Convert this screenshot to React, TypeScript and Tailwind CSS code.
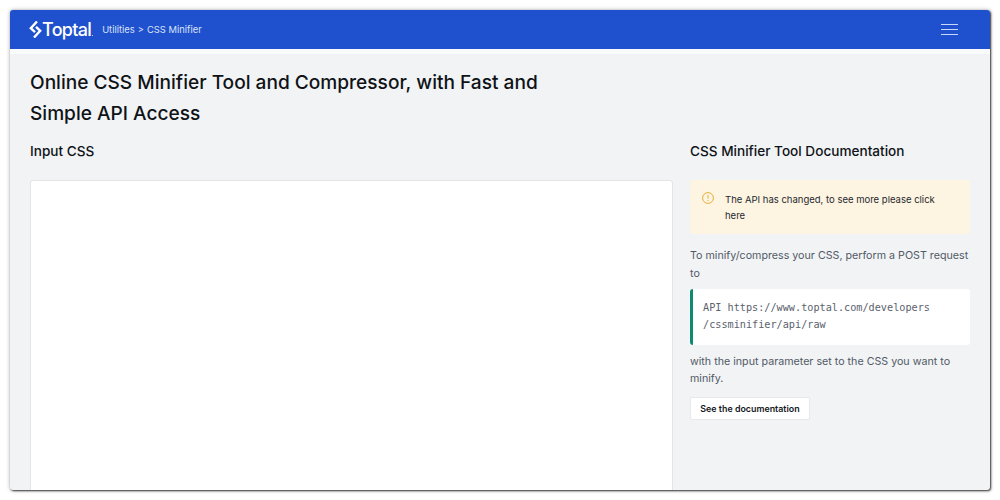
export default function App() {
  return (
    <div className="h-[500px] w-[1000px] overflow-hidden bg-white p-[10px] font-['Inter',sans-serif]">
      <div className="flex h-[480px] flex-col overflow-hidden rounded-[3px] bg-[#f1f3f5] shadow-[1px_1px_2px_rgba(0,0,0,0.75),0_0_4px_rgba(0,0,0,0.3)]">
        <header className="flex h-[39px] shrink-0 items-center justify-between bg-[#1f50cd] pl-[19px] pr-[32px]">
          <div className="flex items-center">
            <svg width="13" height="17" viewBox="0 0 13 17" fill="none" stroke="white" strokeWidth="2.4">
              <path d="M8 0.5 L1.8 7.2 L6 11.2 M5 16.5 L11.2 9.8 L7 5.8" />
            </svg>
            <span className="text-[18px] font-medium leading-none tracking-[-0.7px] text-white">Toptal</span>
            <span className="mt-[11px] ml-[1px] h-[1px] w-[1px] bg-white/70" />
            <div className="ml-[9px] mt-[1px] flex items-center text-[9.4px] text-[#dbe4fa]">
              <span>Utilities</span>
              <span className="mx-[3px]">&gt;</span>
              <span>CSS Minifier</span>
            </div>
          </div>
          <div className="flex w-[17px] flex-col gap-[3.5px]">
            <div className="h-[1.5px] bg-[#c9d7fa]" />
            <div className="h-[1.5px] bg-[#c9d7fa]" />
            <div className="h-[1.5px] bg-[#c9d7fa]" />
          </div>
        </header>
        <div className="h-[5px] shrink-0 bg-[#f9fafa]" />
        <main className="flex flex-1 flex-col overflow-hidden px-[20px] pt-[13px]">
          <h1 className="w-[530px] text-[19.1px] font-medium leading-[31px] text-[#0f1216]">
            Online CSS Minifier Tool and Compressor, with Fast and Simple API Access
          </h1>
          <div className="mt-[11px] flex flex-1 gap-[17px] overflow-hidden">
            <section className="flex w-[643px] flex-col">
              <h2 className="text-[13.6px] font-medium leading-[22px] text-[#0f1216]">Input CSS</h2>
              <div className="mt-[18px] flex-1 rounded-t-[3px] border border-b-0 border-[#e3e6e9] bg-white" />
            </section>
            <aside className="w-[280px]">
              <h2 className="text-[13.6px] font-medium leading-[22px] text-[#0f1216]">CSS Minifier Tool Documentation</h2>
              <div className="mt-[18px] flex h-[54px] rounded-[3px] bg-[#fdf4e1] pl-[12px] pr-[20px] pt-[12px]">
                <svg className="shrink-0" width="12" height="12" viewBox="0 0 12 12" fill="none" stroke="#e6ad3a">
                  <circle cx="6" cy="6" r="5.4" />
                  <path d="M6 3v3.6M6 8v1" />
                </svg>
                <p className="ml-[11px] text-[9.5px] leading-[16px] text-[#262a30]">
                  The API has changed, to see more please click here
                </p>
              </div>
              <p className="mt-[13px] text-[10.7px] leading-[17.5px] text-[#525a66]">
                To minify/compress your CSS, perform a POST request to
              </p>
              <div className="mt-[7px] h-[56px] rounded-[3px] border-l-[3px] border-[#0f8a72] bg-white pl-[10px] pt-[11px] font-['DejaVu_Sans_Mono',monospace] text-[10.2px] leading-[16.5px] text-[#5b626d]">
                API https://www.toptal.com/developers
                <br />
                /cssminifier/api/raw
              </div>
              <p className="mt-[8px] text-[10.7px] leading-[17px] text-[#525a66]">
                with the input parameter set to the CSS you want to minify.
              </p>
              <button className="mt-[10px] flex h-[23px] w-[120px] items-center justify-center rounded-[2px] border border-[#e6e8eb] bg-white text-[8.9px] font-semibold text-[#15181d]">
                See the documentation
              </button>
            </aside>
          </div>
        </main>
      </div>
    </div>
  );
}
